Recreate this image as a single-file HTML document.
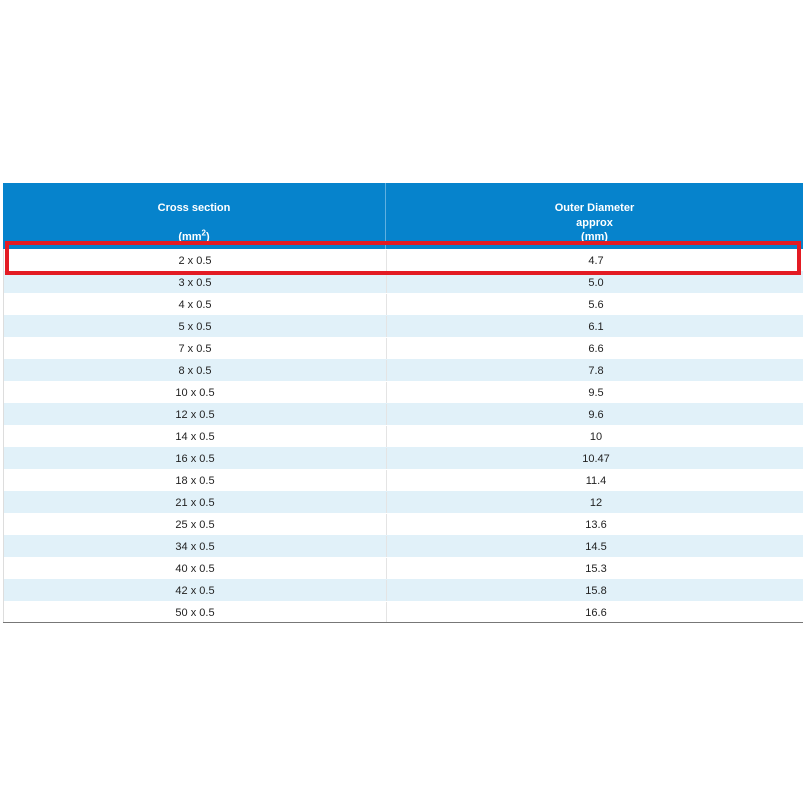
<!DOCTYPE html>
<html><head><style>
body{margin:0;width:803px;height:803px;background:#fff;position:relative;overflow:hidden;font-family:"Liberation Sans",Arial,sans-serif;}
.hdr{position:absolute;left:3px;top:183px;width:800px;height:66px;background:#0683cc;}
.hdr .div{position:absolute;left:382px;top:0;width:1px;height:66px;background:#5fb0e0;}
.ht{position:absolute;color:#fff;font-weight:bold;font-size:11px;text-align:center;line-height:14.5px;}
.row{position:absolute;left:3px;width:800px;height:22px;font-size:11px;color:#222;border-left:1px solid #ddd;box-sizing:border-box;}
.row.s{background:#e1f1f9;}
.row span{position:absolute;top:1px;line-height:22px;text-align:center;}
.row .a{left:0;width:382px;}
.row .b{left:382px;width:418px;border-left:1px solid #e4e4e4;height:21px;}
.bot{position:absolute;left:3px;top:622px;width:800px;height:1px;background:#777;}
.red{position:absolute;left:5px;top:241px;width:788px;height:26px;border:4px solid #e31b23;}
</style></head><body>
<div class="hdr"><div class="div"></div>
<div class="ht" style="left:0;width:382px;top:18px;">Cross section</div>
<div class="ht" style="left:0;width:382px;top:47px;">(mm<sup style="font-size:8px;line-height:0">2</sup>)</div>
<div class="ht" style="left:383px;width:417px;top:18px;">Outer Diameter<br>approx<br>(mm)</div>
</div>
<div class="row" style="top:249px"><span class="a">2 x 0.5</span><span class="b">4.7</span></div>
<div class="row s" style="top:271px"><span class="a">3 x 0.5</span><span class="b">5.0</span></div>
<div class="row" style="top:293px"><span class="a">4 x 0.5</span><span class="b">5.6</span></div>
<div class="row s" style="top:315px"><span class="a">5 x 0.5</span><span class="b">6.1</span></div>
<div class="row" style="top:337px"><span class="a">7 x 0.5</span><span class="b">6.6</span></div>
<div class="row s" style="top:359px"><span class="a">8 x 0.5</span><span class="b">7.8</span></div>
<div class="row" style="top:381px"><span class="a">10 x 0.5</span><span class="b">9.5</span></div>
<div class="row s" style="top:403px"><span class="a">12 x 0.5</span><span class="b">9.6</span></div>
<div class="row" style="top:425px"><span class="a">14 x 0.5</span><span class="b">10</span></div>
<div class="row s" style="top:447px"><span class="a">16 x 0.5</span><span class="b">10.47</span></div>
<div class="row" style="top:469px"><span class="a">18 x 0.5</span><span class="b">11.4</span></div>
<div class="row s" style="top:491px"><span class="a">21 x 0.5</span><span class="b">12</span></div>
<div class="row" style="top:513px"><span class="a">25 x 0.5</span><span class="b">13.6</span></div>
<div class="row s" style="top:535px"><span class="a">34 x 0.5</span><span class="b">14.5</span></div>
<div class="row" style="top:557px"><span class="a">40 x 0.5</span><span class="b">15.3</span></div>
<div class="row s" style="top:579px"><span class="a">42 x 0.5</span><span class="b">15.8</span></div>
<div class="row" style="top:601px"><span class="a">50 x 0.5</span><span class="b">16.6</span></div>
<div class="bot"></div>
<div class="red"></div>
</body></html>
